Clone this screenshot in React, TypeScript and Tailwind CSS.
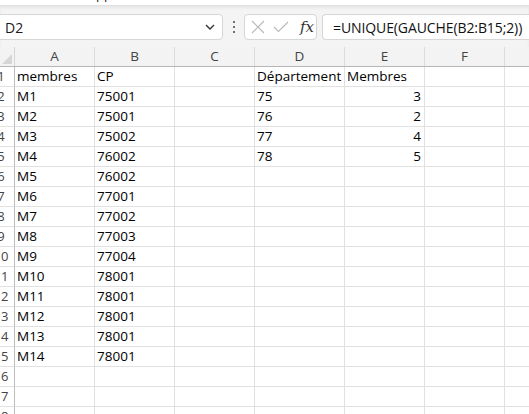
import React from "react";

const cols = [
  { l: "A", w: 80 },
  { l: "B", w: 80 },
  { l: "C", w: 80 },
  { l: "D", w: 90 },
  { l: "E", w: 80 },
  { l: "F", w: 80 },
  { l: "", w: 40 },
];

type Cell = { t: string; right?: boolean };

const data: Record<number, Cell[]> = {
  1: [{ t: "membres" }, { t: "CP" }, { t: "" }, { t: "Département" }, { t: "Membres" }],
  2: [{ t: "M1" }, { t: "75001" }, { t: "" }, { t: "75" }, { t: "3", right: true }],
  3: [{ t: "M2" }, { t: "75001" }, { t: "" }, { t: "76" }, { t: "2", right: true }],
  4: [{ t: "M3" }, { t: "75002" }, { t: "" }, { t: "77" }, { t: "4", right: true }],
  5: [{ t: "M4" }, { t: "76002" }, { t: "" }, { t: "78" }, { t: "5", right: true }],
  6: [{ t: "M5" }, { t: "76002" }],
  7: [{ t: "M6" }, { t: "77001" }],
  8: [{ t: "M7" }, { t: "77002" }],
  9: [{ t: "M8" }, { t: "77003" }],
  10: [{ t: "M9" }, { t: "77004" }],
  11: [{ t: "M10" }, { t: "78001" }],
  12: [{ t: "M11" }, { t: "78001" }],
  13: [{ t: "M12" }, { t: "78001" }],
  14: [{ t: "M13" }, { t: "78001" }],
  15: [{ t: "M14" }, { t: "78001" }],
};

const rows = Array.from({ length: 18 }, (_, i) => i + 1);

export default function App() {
  return (
    <div className="w-[529px] h-[414px] overflow-hidden bg-white font-['Open_Sans','Noto_Sans',sans-serif] text-black">
      {/* top strip */}
      <div className="h-[5px] bg-white overflow-hidden relative">
        <div className="absolute left-[96px] top-[-15px] text-[13px] leading-[18px] text-[#222]">pp</div>
      </div>
      {/* formula bar */}
      <div className="h-[42px] bg-[#f4f4f4] border-t border-[#e2e2e2] shadow-[inset_0_2px_3px_rgba(0,0,0,0.06)] flex items-start pt-[8px]">
        <div className="ml-[-6px] w-[229px] h-[26px] bg-white border border-[#d6d6d6] rounded-[4px] flex items-center pl-[10px] pr-[6px] shrink-0">
          <span className="text-[14px] text-[#1a1a1a] flex-1">D2</span>
          <svg width="10" height="6" viewBox="0 0 10 6" className="mr-[1px]">
            <path d="M1 1 L5 5 L9 1" fill="none" stroke="#333" strokeWidth="1.4" />
          </svg>
        </div>
        <div className="w-[21px] h-[26px] flex flex-col items-center justify-center gap-[3px] shrink-0">
          <span className="w-[2px] h-[2px] bg-[#444] rounded-full"></span>
          <span className="w-[2px] h-[2px] bg-[#444] rounded-full"></span>
          <span className="w-[2px] h-[2px] bg-[#444] rounded-full"></span>
        </div>
        <div className="w-[73px] h-[26px] bg-white border border-[#d6d6d6] rounded-[4px] flex items-center pl-[6px] shrink-0">
          <svg width="14" height="14" viewBox="0 0 14 14">
            <path d="M1 1 L13 13 M13 1 L1 13" stroke="#b8b8b8" strokeWidth="1.1" fill="none" />
          </svg>
          <svg width="16" height="12" viewBox="0 0 16 12" className="ml-[8px]">
            <path d="M1 6 L5.5 10.5 L15 1" stroke="#b8b8b8" strokeWidth="1.1" fill="none" />
          </svg>
          <span className="ml-[11px] font-['DejaVu_Serif',serif] italic text-[15px] text-[#333] leading-none">
            fx
          </span>
        </div>
        <div className="ml-[5px] flex-1 h-[26px] bg-white border border-r-0 border-[#d6d6d6] rounded-l-[4px] flex items-center pl-[10px]">
          <span className="text-[14px] text-[#111] tracking-[-0.1px]">=UNIQUE(GAUCHE(B2:B15;2))</span>
        </div>
      </div>
      {/* column headers */}
      <div className="flex h-[20px] bg-[#f3f3f3] border-b border-[#b6b6b6]">
        <div className="w-[15px] shrink-0 border-r border-[#d4d4d4] relative overflow-hidden">
          <div className="absolute right-[2px] bottom-[2px] w-0 h-0 border-l-[10px] border-l-transparent border-b-[10px] border-b-[#d6d6d6]"></div>
        </div>
        {cols.map((c, i) => (
          <div
            key={i}
            style={{ width: c.w }}
            className="shrink-0 border-r border-[#dcdcdc] flex items-center justify-center text-[13.5px] text-[#444]"
          >
            {c.l}
          </div>
        ))}
      </div>
      {/* rows */}
      {rows.map((r) => {
        const cells = data[r] || [];
        return (
          <div key={r} className="flex h-[20px]">
            <div className="w-[15px] shrink-0 overflow-hidden border-r border-[#bdbdbd] border-b border-b-[#e1e1e1] bg-white flex items-center">
              <span className="block shrink-0 w-[28px] ml-[-13px] text-center text-[13px] text-[#444]">{r}</span>
            </div>
            {cols.map((c, i) => {
              const cell = cells[i];
              return (
                <div
                  key={i}
                  style={{ width: c.w }}
                  className={
                    "shrink-0 border-r border-b border-[#e1e1e1] flex items-center px-[2px] text-[13.5px] whitespace-nowrap overflow-hidden " +
                    (cell && cell.right ? "justify-end pr-[3px]" : "justify-start")
                  }
                >
                  {cell ? cell.t : ""}
                </div>
              );
            })}
          </div>
        );
      })}
    </div>
  );
}
